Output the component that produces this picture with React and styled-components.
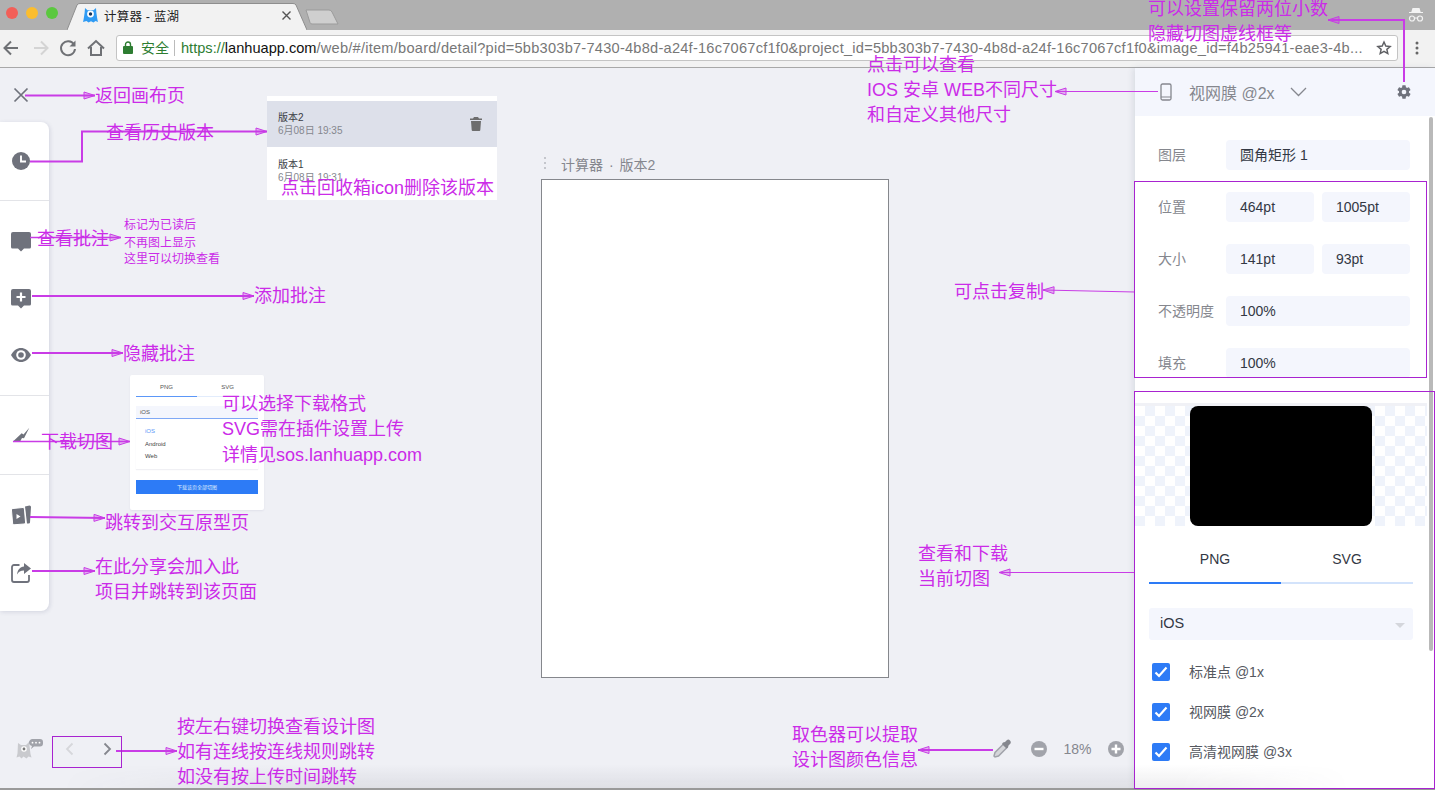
import styled, { createGlobalStyle } from "styled-components";

const FONT = `"Liberation Sans", "Noto Sans CJK SC", sans-serif`;
const NOTE = "#cb2be8";
const LINE = "#c93ce6";
const ICON = "#6f727c";

const GlobalStyle = createGlobalStyle`
  html, body {
    margin: 0;
    padding: 0;
    overflow: hidden;
    background: #eff0f5;
    font-family: ${FONT};
  }
  * { box-sizing: border-box; }
`;

const Page = styled.div`
  position: relative;
  width: 1435px;
  height: 790px;
  display: flex;
  flex-direction: column;
  overflow: hidden;
  background: #eff0f5;
`;

/* browser chrome */
const TabStrip = styled.div`
  height: 30px;
  background: #b0b0b0;
  display: flex;
  align-items: flex-end;
  padding-left: 6px;
`;

const Lights = styled.div`
  display: flex;
  gap: 8px;
  align-self: flex-start;
  margin-top: 7px;
`;

const Light = styled.span`
  width: 12px;
  height: 12px;
  border-radius: 50%;
  background: ${(p) => p.$color};
`;

const Tab = styled.div`
  position: relative;
  width: 240px;
  height: 27px;
  margin-left: 9px;
  display: flex;
  align-items: center;
  padding: 0 14px 3px 16px;
  font-size: 12.5px;
  color: #222;

  > svg.shape {
    position: absolute;
    left: 0;
    top: 0;
  }
`;

const TabTitle = styled.span`
  position: relative;
  margin-left: 6px;
  flex: 1;
  letter-spacing: 0.2px;
`;

const TabClose = styled.svg`
  position: relative;
  margin-right: 2px;
`;

const Favicon = styled.svg`
  position: relative;
`;

const NewTab = styled.svg`
  margin-left: -2px;
  margin-bottom: 5px;
`;

const Incognito = styled.svg`
  margin-left: auto;
  margin-right: 11px;
  align-self: center;
`;

const Toolbar = styled.div`
  height: 38px;
  background: #f2f2f2;
  border-bottom: 1px solid #a8a8a8;
  display: flex;
  align-items: center;
  padding: 0 0 2px 0;
`;

const NavIcon = styled.svg`
  width: 28px;
  height: 24px;
  flex: none;
`;

const Omnibox = styled.div`
  width: 1282px;
  height: 26px;
  margin-left: 4px;
  background: #fff;
  border: 1px solid #c4c4c4;
  border-radius: 3px;
  display: flex;
  align-items: center;
  padding: 0 5px 0 6px;
  font-size: 14.6px;
  white-space: nowrap;
  overflow: hidden;
`;

const Secure = styled.span`
  color: #2e7d32;
  font-size: 14px;
  margin-left: 8px;
  padding-right: 5px;
  margin-right: 6px;
  border-right: 1px solid #bbb;
  line-height: 16px;
`;

const Url = styled.span`
  flex: 1;
  color: #777;
  overflow: hidden;
  letter-spacing: 0.24px;
`;

const UrlScheme = styled.span`
  color: #2e7d32;
  letter-spacing: 0;
`;

const UrlHost = styled.span`
  color: #111;
  letter-spacing: 0;
`;

/* workspace */
const Workspace = styled.div`
  position: relative;
  flex: 1;
  display: flex;
  min-height: 0;
`;

const LeftRail = styled.div`
  width: 130px;
  flex: none;
  display: flex;
  flex-direction: column;
`;

const CloseRow = styled.div`
  height: 54px;
  padding-left: 13px;
  display: flex;
  align-items: center;
`;

const ToolCard = styled.div`
  width: 49px;
  height: 489px;
  background: #fff;
  border-radius: 0 8px 8px 0;
  box-shadow: 1px 1px 4px rgba(60, 70, 110, 0.16);
`;

const ToolGroup = styled.div`
  height: ${(p) => p.$h}px;
  display: flex;
  flex-direction: column;
  justify-content: center;
  border-top: ${(p) => (p.$first ? "none" : "1px solid #e3e4e8")};
`;

const ToolButton = styled.div`
  height: 57px;
  flex: none;
  display: flex;
  align-items: center;
  padding-left: 9px;
`;

const PagerRow = styled.div`
  margin-top: auto;
  height: 38px;
  margin-bottom: 20px;
  display: flex;
  align-items: center;
  padding-left: 16px;
`;

const Pager = styled.div`
  display: flex;
  gap: 21px;
  margin-left: 18px;
`;

const Canvas = styled.div`
  flex: 1;
  display: flex;
  flex-direction: column;
  padding-left: 411px;
  padding-top: 88px;
  min-width: 0;
`;

const BoardTitle = styled.div`
  height: 23px;
  display: flex;
  align-items: flex-start;
  gap: 15px;
  padding-left: 3px;
  font-size: 14px;
  line-height: 18px;
  word-spacing: 2px;
  color: #85878e;
`;

const Grip = styled.span`
  width: 2px;
  height: 15px;
  margin-top: 1px;
  background: repeating-linear-gradient(#c4c6cc 0 2px, transparent 2px 5px);
`;

const Artboard = styled.div`
  width: 348px;
  height: 499px;
  background: #fff;
  border: 1px solid #85878c;
`;

const ZoomBar = styled.div`
  margin-top: auto;
  margin-bottom: 20px;
  height: 38px;
  display: flex;
  align-items: center;
  justify-content: flex-end;
  padding-right: 11px;
`;

const ZoomValue = styled.span`
  width: 61px;
  text-align: center;
  font-size: 14px;
  color: #85878e;
`;

const PickerIcon = styled.svg`
  margin-right: 19px;
`;

/* right panel */
const Panel = styled.aside`
  position: relative;
  width: 300px;
  flex: none;
  background: #fff;
  box-shadow: -2px 0 6px rgba(60, 70, 110, 0.12);
  overflow: hidden;
`;

const PanelHead = styled.div`
  height: 48px;
  background: #f4f6fd;
  display: flex;
  align-items: center;
  padding: 0 23px 0 24px;
  font-size: 16px;
  color: #85878e;
`;

const HeadLabel = styled.span`
  margin-left: 16px;
`;

const Chevron = styled.svg`
  margin-left: 15px;
`;

const Gear = styled.svg`
  margin-left: auto;
`;

const Scrollbar = styled.div`
  position: absolute;
  right: 2px;
  top: 49px;
  width: 4px;
  height: 534px;
  border-radius: 2px;
  background: #b9b9b9;
`;

const Props = styled.div`
  padding: 24px 25px 0 23px;
  display: flex;
  flex-direction: column;
  gap: 22px;
`;

const PropRow = styled.div`
  display: flex;
  align-items: center;
  height: 30px;
  gap: 8px;
`;

const PropLabel = styled.span`
  width: 60px;
  flex: none;
  padding-bottom: 2px;
  font-size: 14px;
  color: #85878e;
  white-space: nowrap;
`;

const PropValue = styled.div`
  flex: 1;
  height: 30px;
  line-height: 30px;
  padding-left: 14px;
  background: #f4f6fd;
  border-radius: 4px;
  font-size: 14px;
  color: #333844;
`;

const Preview = styled.div`
  margin-top: 25px;
  width: 292px;
  height: 123px;
  padding-top: 3px;
  display: flex;
  justify-content: center;
  background:
    linear-gradient(#f0f1f6 0 3px, transparent 3px),
    repeating-conic-gradient(#eff3fb 0 25%, #fff 0 50%) 0 3px / 20px 20px;
`;

const Slice = styled.div`
  width: 182px;
  height: 120px;
  background: #000;
  border-radius: 8px;
`;

const FormatTabs = styled.div`
  margin: 22px 22px 0 14px;
  display: flex;
`;

const FormatTab = styled.div`
  flex: 1;
  height: 36px;
  padding-top: 1px;
  line-height: 20px;
  text-align: center;
  font-size: 14px;
  color: #333844;
  border-bottom: 2px solid ${(p) => (p.$active ? "#2d7bf6" : "#d3e3fb")};
`;

const Select = styled.div`
  margin: 24px 22px 0 14px;
  height: 32px;
  background: #f4f6fd;
  border-radius: 3px;
  display: flex;
  align-items: center;
  justify-content: space-between;
  padding: 0 8px 2px 11px;
  font-size: 14.5px;
  color: #333844;
`;

const Caret = styled.span`
  width: 0;
  height: 0;
  margin-top: 5px;
  border-left: 5px solid transparent;
  border-right: 5px solid transparent;
  border-top: 5px solid #d4d6dc;
`;

const Scales = styled.div`
  margin-top: 12px;
  padding-left: 17px;
`;

const ScaleRow = styled.label`
  height: 40px;
  display: flex;
  align-items: center;
  gap: 19px;
  font-size: 14px;
  color: #55585f;
`;

const ScaleText = styled.span`
  padding-bottom: 2px;
`;

const CheckBox = styled.span`
  width: 18px;
  height: 18px;
  border-radius: 2px;
  background: #2d7bf6;
  display: flex;
  align-items: center;
  justify-content: center;
`;

const BottomFade = styled.div`
  position: absolute;
  left: 0;
  right: 0;
  bottom: 0;
  height: 24px;
  pointer-events: none;
  background: linear-gradient(to top, rgba(40, 40, 60, 0.08), transparent);
  mask-image: linear-gradient(90deg, transparent 60px, #000 320px, #000 1180px, transparent 1350px);
`;

const PageEdge = styled.div`
  height: 2px;
  flex: none;
  background: #9a9a9a;
`;

/* pasted screenshots on top of the board */
const VersionPop = styled.div`
  position: absolute;
  left: 267px;
  top: 28px;
  width: 230px;
  height: 104px;
  padding-top: 5px;
  background: #fff;
`;

const VersionItem = styled.div`
  position: relative;
  height: ${(p) => (p.$active ? 46 : 52)}px;
  padding: 10px 11px;
  margin-bottom: 1px;
  background: ${(p) => (p.$active ? "#dde0ea" : "#fff")};
  font-size: 10px;
  line-height: 13px;
  color: #3a3c44;
`;

const VersionDate = styled.div`
  color: #85878e;
`;

const Trash = styled.svg`
  position: absolute;
  right: 14px;
  top: 16px;
`;

const DownloadPop = styled.div`
  position: absolute;
  left: 130px;
  top: 307px;
  width: 134px;
  height: 135px;
  padding: 6px 6px 0;
  background: #fff;
  border-radius: 2px;
  box-shadow: 0 1px 2px rgba(60, 70, 110, 0.08);
  font-size: 6px;
  color: #555;
`;

const MiniTabs = styled.div`
  display: flex;
  height: 16px;
  background: linear-gradient(90deg, #5b97f8 50%, #e2ecfc 50%) bottom / 100% 1px no-repeat;
`;

const MiniTab = styled.span`
  flex: 1;
  text-align: center;
  line-height: 12px;
`;

const MiniSelect = styled.div`
  margin-top: 9px;
  height: 13px;
  line-height: 12px;
  padding-left: 4px;
  background: #f4f6fd;
  border-bottom: 1px solid #80a9f6;
`;

const MiniList = styled.div`
  height: 50px;
  padding: 6px 0 0 9px;
  box-shadow: 0 1px 1px rgba(60, 70, 110, 0.08);
`;

const MiniItem = styled.div`
  height: 12.5px;
  line-height: 12px;
  color: ${(p) => (p.$active ? "#5b97f8" : "#444")};
`;

const MiniButton = styled.div`
  margin-top: 11px;
  height: 14px;
  line-height: 14px;
  background: #2d7bf6;
  text-align: center;
  color: #dfeafd;
  font-size: 5px;
`;

/* annotations drawn over the screenshot */
const ArrowLayer = styled.svg`
  position: absolute;
  left: 0;
  top: 0;
  pointer-events: none;
`;

const Note = styled.div`
  position: absolute;
  left: ${(p) => p.$x}px;
  top: ${(p) => p.$y - 11}px;
  height: 24px;
  line-height: 24px;
  font-size: ${(p) => p.$size || 18}px;
  color: ${NOTE};
  white-space: nowrap;
`;

const Frame = styled.div`
  position: absolute;
  left: ${(p) => p.$x}px;
  top: ${(p) => p.$y}px;
  width: ${(p) => p.$w}px;
  height: ${(p) => p.$h}px;
  border: 1px solid #a823d0;
  pointer-events: none;
`;

const NOTES = [
  { x: 95, y: 95, text: "返回画布页" },
  { x: 106, y: 132, text: "查看历史版本" },
  { x: 281, y: 187, text: "点击回收箱icon删除该版本" },
  { x: 37, y: 238, text: "查看批注" },
  { x: 124, y: 224, size: 12, text: "标记为已读后" },
  { x: 124, y: 242, size: 12, text: "不再图上显示" },
  { x: 124, y: 258, size: 12, text: "这里可以切换查看" },
  { x: 254, y: 295, text: "添加批注" },
  { x: 123, y: 353, text: "隐藏批注" },
  { x: 41, y: 441, text: "下载切图" },
  { x: 222, y: 403, text: "可以选择下载格式" },
  { x: 222, y: 428, text: "SVG需在插件设置上传" },
  { x: 222, y: 454, text: "详情见sos.lanhuapp.com" },
  { x: 105, y: 522, text: "跳转到交互原型页" },
  { x: 95, y: 566, text: "在此分享会加入此" },
  { x: 95, y: 591, text: "项目并跳转到该页面" },
  { x: 177, y: 726, text: "按左右键切换查看设计图" },
  { x: 177, y: 751, text: "如有连线按连线规则跳转" },
  { x: 177, y: 776, text: "如没有按上传时间跳转" },
  { x: 792, y: 734, text: "取色器可以提取" },
  { x: 792, y: 759, text: "设计图颜色信息" },
  { x: 918, y: 553, text: "查看和下载" },
  { x: 918, y: 578, text: "当前切图" },
  { x: 954, y: 291, text: "可点击复制" },
  { x: 867, y: 64, text: "点击可以查看" },
  { x: 867, y: 89, text: "IOS 安卓 WEB不同尺寸" },
  { x: 867, y: 114, text: "和自定义其他尺寸" },
  { x: 1148, y: 8, text: "可以设置保留两位小数" },
  { x: 1148, y: 33, text: "隐藏切图虚线框等" },
];

// each arrow: points of the line, the last one is the tip
const ARROWS = [
  { pts: [[25, 95.5], [95, 95.5]], w: 2 },
  { pts: [[30, 161.5], [82, 161.5], [82, 131.5], [267, 131.5]], w: 2 },
  { pts: [[30, 237.5], [121, 237.5]], w: 1.5 },
  { pts: [[32, 296], [254, 296]], w: 2 },
  { pts: [[32, 353], [123, 353]], w: 2 },
  { pts: [[13, 441.5], [130, 441.5]], w: 1.5 },
  { pts: [[30, 517], [105, 518]], w: 2 },
  { pts: [[32, 571], [95, 571]], w: 2 },
  { pts: [[116, 751], [177, 751]], w: 2 },
  { pts: [[993, 750], [918, 750]], w: 2 },
  { pts: [[1135, 572.5], [999, 572.5]], w: 1 },
  { pts: [[1135, 292], [1043, 290]], w: 1 },
  { pts: [[1158, 91.5], [1055, 91.5]], w: 1 },
  { pts: [[1404, 82], [1404, 20], [1328, 20]], w: 2 },
];

function Arrow({ pts, w }) {
  const tip = pts[pts.length - 1];
  const prev = pts[pts.length - 2];
  const a = Math.atan2(tip[1] - prev[1], tip[0] - prev[0]);
  const point = (back, side) => [
    tip[0] - back * Math.cos(a) - side * Math.sin(a),
    tip[1] - back * Math.sin(a) + side * Math.cos(a),
  ];
  const head = [tip, point(11, 3.5), point(11, -3.5)];
  return (
    <g stroke={LINE} fill="none">
      <polyline points={pts.map((p) => p.join(",")).join(" ")} strokeWidth={w} />
      <polygon points={head.map((p) => p.join(",")).join(" ")} fill="rgba(201,60,230,.35)" strokeWidth="1" />
    </g>
  );
}

const ToolIcon = ({ children }) => (
  <svg width="24" height="24" viewBox="0 0 24 24">
    {children}
  </svg>
);

function BubblePath() {
  return <path d="M4 3h16a2 2 0 0 1 2 2v13a1.5 1.5 0 0 1-1.5 1.5H15l-3 3-3-3H3.5A1.5 1.5 0 0 1 2 18V5a2 2 0 0 1 2-2z" fill={ICON} />;
}

function Check() {
  return (
    <svg width="14" height="12" viewBox="0 0 14 12">
      <path d="M1.5 6.5 5 10l7.5-8.5" fill="none" stroke="#fff" strokeWidth="2.2" />
    </svg>
  );
}

function CircleSign({ plus }) {
  return (
    <svg width="16" height="16" viewBox="0 0 16 16">
      <circle cx="8" cy="8" r="8" fill="#a1a3aa" />
      <path d={plus ? "M3.5 8h9M8 3.5v9" : "M3.5 8h9"} stroke="#fff" strokeWidth="2.4" />
    </svg>
  );
}

export default function App() {
  const url = "/web/#/item/board/detail?pid=5bb303b7-7430-4b8d-a24f-16c7067cf1f0&project_id=5bb303b7-7430-4b8d-a24f-16c7067cf1f0&image_id=f4b25941-eae3-4b...";
  const scales = ["标准点 @1x", "视网膜 @2x", "高清视网膜 @3x"];
  return (
    <Page>
      <GlobalStyle />
      <TabStrip>
        <Lights>
          <Light $color="#f25f58" />
          <Light $color="#fbbd2e" />
          <Light $color="#5bc83f" />
        </Lights>
        <Tab>
          <svg className="shape" width="240" height="27" viewBox="0 0 240 27">
            <path d="M0 27 L10 2 Q11 .5 13 .5 H226 Q228 .5 229 2 L240 27" fill="#f2f2f2" stroke="#8e8e8e" />
          </svg>
          <Favicon width="15" height="16" viewBox="0 0 15 16">
            <path d="M2 1l2.5 2.2h6L13 1l.4 5c.5 3 1 7 1.6 9l-2.5-1-2 1.4-2.5-1.2-2.5 1.2-2-1.4L0 15c.6-2 1.1-6 1.6-9z" fill="#2f9bf4" />
            <circle cx="7.5" cy="7" r="3.4" fill="#fff" />
            <circle cx="7.5" cy="7" r="1.7" fill="#17365c" />
          </Favicon>
          <TabTitle>计算器 - 蓝湖</TabTitle>
          <TabClose width="9" height="9" viewBox="0 0 9 9">
            <path d="M.5.5l8 8M8.5.5l-8 8" stroke="#555" strokeWidth="1.4" />
          </TabClose>
        </Tab>
        <NewTab width="34" height="16" viewBox="0 0 34 16">
          <path d="M1 1h23q2 0 3 2l6 12H7q-1.500 0-2-1.500z" fill="#cfcfcf" stroke="#9b9b9b" />
        </NewTab>
        <Incognito width="16" height="16" viewBox="0 0 16 16">
          <path d="M4.500 1h7l1.200 4H15v1H1V5h2.300z" fill="#f3f3f3" />
          <circle cx="4" cy="11.500" r="2.500" fill="none" stroke="#f3f3f3" strokeWidth="1.200" />
          <circle cx="12" cy="11.500" r="2.500" fill="none" stroke="#f3f3f3" strokeWidth="1.200" />
          <path d="M6.500 11h3" stroke="#f3f3f3" />
        </Incognito>
      </TabStrip>

      <Toolbar>
        <NavIcon viewBox="2 0 28 24">
          <path d="M20 12H7M13 5.500 6.500 12l6.500 6.500" fill="none" stroke="#6f7175" strokeWidth="2" />
        </NavIcon>
        <NavIcon viewBox="2 0 28 24">
          <path d="M8 12h13M15 5.500 21.500 12 15 18.500" fill="none" stroke="#d4d4d4" strokeWidth="2" />
        </NavIcon>
        <NavIcon viewBox="2 0 28 24">
          <path d="M20 8.500A7 7 0 1 0 21 13" fill="none" stroke="#6f7175" strokeWidth="2" />
          <path d="M21.500 4.500v6h-6z" fill="#6f7175" />
        </NavIcon>
        <NavIcon viewBox="2 0 28 24">
          <path d="M6 12.500 14 5l8 7.500M9 11v8h10v-8" fill="none" stroke="#6f7175" strokeWidth="2" />
        </NavIcon>
        <Omnibox>
          <svg width="10" height="13" viewBox="0 0 10 13">
            <path d="M2.500 5V3.500a2.500 2.500 0 0 1 5 0V5" fill="none" stroke="#2e7d32" strokeWidth="1.400" />
            <rect y="5" width="10" height="8" rx="1" fill="#2e7d32" />
          </svg>
          <Secure>安全</Secure>
          <Url>
            <UrlScheme>https://</UrlScheme>
            <UrlHost>lanhuapp.com</UrlHost>
            {url}
          </Url>
          <svg width="16" height="16" viewBox="0 0 24 24">
            <path d="M12 3l2.700 6 6.500.7-4.900 4.300 1.400 6.400L12 17l-5.700 3.400L7.700 14 2.800 9.700 9.300 9z" fill="none" stroke="#5f6064" strokeWidth="2.200" />
          </svg>
        </Omnibox>
        <NavIcon viewBox="0 0 28 24">
          <path d="M19 7v.01M19 12v.01M19 17v.01" stroke="#666" strokeWidth="3" strokeLinecap="round" />
        </NavIcon>
      </Toolbar>

      <Workspace>
        <LeftRail>
          <CloseRow>
            <svg width="16" height="16" viewBox="0 0 16 16">
              <path d="M1.500 1.500l13 13M14.500 1.500l-13 13" stroke={ICON} strokeWidth="1.700" />
            </svg>
          </CloseRow>
          <ToolCard>
            <ToolGroup $h={78} $first>
              <ToolButton>
                <ToolIcon>
                  <circle cx="12" cy="12" r="9" fill={ICON} />
                  <path d="M12 6.500V12.500H17" fill="none" stroke="#fff" strokeWidth="1.900" />
                </ToolIcon>
              </ToolButton>
            </ToolGroup>
            <ToolGroup $h={195}>
              <ToolButton>
                <ToolIcon>
                  <BubblePath />
                </ToolIcon>
              </ToolButton>
              <ToolButton>
                <ToolIcon>
                  <BubblePath />
                  <path d="M7.500 11h9M12 6.500v9" stroke="#fff" strokeWidth="2.200" />
                </ToolIcon>
              </ToolButton>
              <ToolButton>
                <ToolIcon>
                  <path d="M2 12C4.500 7.500 8 5 12 5s7.500 2.500 10 7C19.500 16.500 16 19 12 19S4.500 16.500 2 12z" fill={ICON} />
                  <circle cx="12" cy="12" r="4.800" fill="#fff" />
                  <circle cx="12" cy="12" r="2.800" fill={ICON} />
                </ToolIcon>
              </ToolButton>
            </ToolGroup>
            <ToolGroup $h={79}>
              <ToolButton>
                <ToolIcon>
                  <path d="M3.700 18.700 12.700 10.300 14.500 11.500 20.300 4.700 15 15.300 13 15 11 18.700z" fill={ICON} />
                </ToolIcon>
              </ToolButton>
            </ToolGroup>
            <ToolGroup $h={137}>
              <ToolButton>
                <ToolIcon>
                  <path d="M16 3.500 20.500 2.500q1.500 0 1.500 1.500l-1 15.500q0 1-1.500 1H18z" fill={ICON} />
                  <rect x="3" y="5" width="13" height="16.500" rx="1.500" fill={ICON} stroke="#fff" strokeWidth="1" transform="rotate(-5 9 13)" />
                  <path d="M7.500 11l4 2.500-4 2.500z" fill="#fff" />
                </ToolIcon>
              </ToolButton>
              <ToolButton>
                <ToolIcon>
                  <path d="M10.500 5H5A2 2 0 0 0 3 7v13a2 2 0 0 0 2 2h13a2 2 0 0 0 2-2v-5" fill="none" stroke={ICON} strokeWidth="1.800" />
                  <path d="M15 3l7 5.500-7 5.500v-3.500c-3.500 0-5.500 1.500-7 4C8.500 10 11 7 15 6.500z" fill={ICON} />
                </ToolIcon>
              </ToolButton>
            </ToolGroup>
          </ToolCard>
          <PagerRow>
            <svg width="28" height="22" viewBox="0 0 28 22">
              <path d="M2 5l3 2h5l3-3 1.500 12 1 3.500-3-1-2 2-3-2-2 2-2-2-3 1 1-4z" fill="#c9cace" />
              <circle cx="8" cy="11" r="2.800" fill="#fff" />
              <circle cx="8" cy="11" r="1.400" fill="#777" />
              <path d="M16 1h8q3 0 3 3v1.500q0 3-3 3h-6l-3 2.500 1-3q-3-1-3-3.500t3-3.500z" fill="#a1a3aa" />
              <path d="M16.500 4.700h.01M20 4.700h.01M23.500 4.700h.01" stroke="#fff" strokeWidth="1.800" strokeLinecap="round" />
            </svg>
            <Pager>
              <svg width="16" height="16" viewBox="0 0 16 16">
                <path d="M10.500 2.500 5 8l5.500 5.500" fill="none" stroke="#d6d7db" strokeWidth="1.800" />
              </svg>
              <svg width="16" height="16" viewBox="0 0 16 16">
                <path d="M5.500 2.500 11 8l-5.500 5.500" fill="none" stroke="#85878e" strokeWidth="1.800" />
              </svg>
            </Pager>
          </PagerRow>
        </LeftRail>

        <Canvas>
          <BoardTitle>
            <Grip />
            计算器 · 版本2
          </BoardTitle>
          <Artboard />
          <ZoomBar>
            <PickerIcon width="20" height="20" viewBox="0 0 20 20">
              <path d="M11.500 5 15 8.500l-8.500 8.500-3.500 1-1-1 1-3.500z" fill="#d5d6da" stroke="#a1a3aa" strokeWidth="1.500" />
              <path d="M11 3.500l2-.5 2-2q1.500-1 3 .5t.5 3l-2 2-.5 2-1.500 1L10 5z" fill="#85878e" />
            </PickerIcon>
            <CircleSign />
            <ZoomValue>18%</ZoomValue>
            <CircleSign plus />
          </ZoomBar>
        </Canvas>

        <Panel>
          <PanelHead>
            <svg width="14" height="18" viewBox="0 0 14 18">
              <rect x="2" y="1" width="10" height="16" rx="1.500" fill="none" stroke="#85878e" strokeWidth="1.300" />
              <path d="M2 14h10" stroke="#85878e" />
            </svg>
            <HeadLabel>视网膜 @2x</HeadLabel>
            <Chevron width="17" height="10" viewBox="0 0 17 10">
              <path d="M1 1l7.500 7.500L16 1" fill="none" stroke="#85878e" strokeWidth="1.300" />
            </Chevron>
            <Gear width="16" height="16" viewBox="0 0 24 24">
              <path
                d="M19.400 13c.04-.33.06-.66.06-1s-.02-.67-.06-1l2.100-1.650a.5.5 0 0 0 .12-.64l-2-3.460a.5.5 0 0 0-.61-.22l-2.490 1a7.300 7.300 0 0 0-1.690-.98l-.38-2.650A.49.49 0 0 0 14 2h-4a.49.49 0 0 0-.49.42l-.38 2.650c-.61.25-1.170.59-1.690.98l-2.490-1a.5.5 0 0 0-.61.22l-2 3.460a.5.5 0 0 0 .12.64L4.570 11c-.04.33-.07.67-.07 1s.03.67.07 1l-2.110 1.650a.5.5 0 0 0-.12.64l2 3.460c.12.22.39.3.61.22l2.490-1c.52.4 1.080.73 1.690.98l.38 2.650c.03.24.24.42.49.42h4c.25 0 .46-.18.49-.42l.38-2.650c.61-.25 1.170-.59 1.690-.98l2.490 1c.22.08.49 0 .61-.22l2-3.460a.5.5 0 0 0-.12-.64zM12 15.500a3.500 3.500 0 1 1 0-7 3.500 3.500 0 0 1 0 7z"
                fill={ICON}
              />
            </Gear>
          </PanelHead>
          <Props>
            <PropRow>
              <PropLabel>图层</PropLabel>
              <PropValue>圆角矩形 1</PropValue>
            </PropRow>
            <PropRow>
              <PropLabel>位置</PropLabel>
              <PropValue>464pt</PropValue>
              <PropValue>1005pt</PropValue>
            </PropRow>
            <PropRow>
              <PropLabel>大小</PropLabel>
              <PropValue>141pt</PropValue>
              <PropValue>93pt</PropValue>
            </PropRow>
            <PropRow>
              <PropLabel>不透明度</PropLabel>
              <PropValue>100%</PropValue>
            </PropRow>
            <PropRow>
              <PropLabel>填充</PropLabel>
              <PropValue>100%</PropValue>
            </PropRow>
          </Props>
          <Preview>
            <Slice />
          </Preview>
          <FormatTabs>
            <FormatTab $active>PNG</FormatTab>
            <FormatTab>SVG</FormatTab>
          </FormatTabs>
          <Select>
            iOS
            <Caret />
          </Select>
          <Scales>
            {scales.map((s) => (
              <ScaleRow key={s}>
                <CheckBox>
                  <Check />
                </CheckBox>
                <ScaleText>{s}</ScaleText>
              </ScaleRow>
            ))}
          </Scales>
          <Scrollbar />
        </Panel>

        <VersionPop>
          <VersionItem $active>
            版本2
            <VersionDate>6月08日 19:35</VersionDate>
            <Trash width="14" height="14" viewBox="0 0 14 14">
              <path d="M5 0h4l1 1.500h3V3H1V1.500h3zM2 4h10l-.7 9a1 1 0 0 1-1 1H3.700a1 1 0 0 1-1-1z" fill="#6d6d6d" />
            </Trash>
          </VersionItem>
          <VersionItem>
            版本1
            <VersionDate>6月08日 19:31</VersionDate>
          </VersionItem>
        </VersionPop>

        <DownloadPop>
          <MiniTabs>
            <MiniTab>PNG</MiniTab>
            <MiniTab>SVG</MiniTab>
          </MiniTabs>
          <MiniSelect>iOS</MiniSelect>
          <MiniList>
            <MiniItem $active>iOS</MiniItem>
            <MiniItem>Android</MiniItem>
            <MiniItem>Web</MiniItem>
          </MiniList>
          <MiniButton>下载该页全部切图</MiniButton>
        </DownloadPop>

        <BottomFade />
      </Workspace>
      <PageEdge />

      <ArrowLayer width="1435" height="790" viewBox="0 0 1435 790">
        {ARROWS.map((a, i) => (
          <Arrow key={i} pts={a.pts} w={a.w} />
        ))}
      </ArrowLayer>
      <Frame $x={1134} $y={181} $w={293} $h={197} />
      <Frame $x={1134} $y={391} $w={301} $h={398} />
      <Frame $x={52} $y={736} $w={70} $h={32} />
      {NOTES.map((n) => (
        <Note key={n.text} $x={n.x} $y={n.y} $size={n.size}>
          {n.text}
        </Note>
      ))}
    </Page>
  );
}
